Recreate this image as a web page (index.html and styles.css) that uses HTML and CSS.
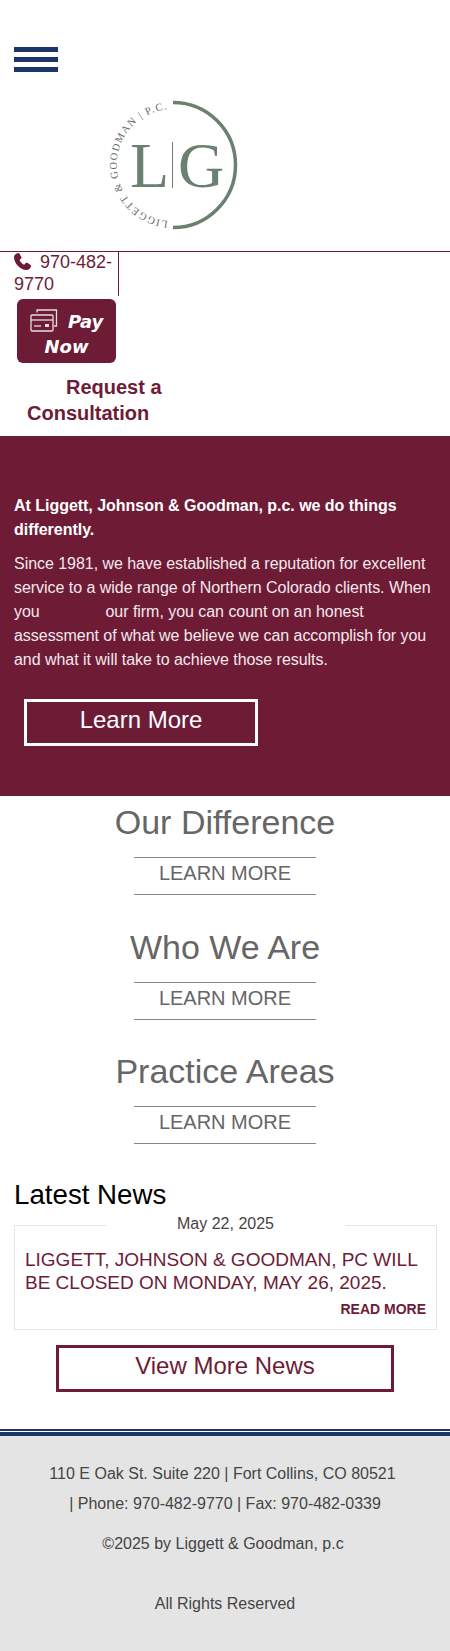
FILE: index.html
```html
<!DOCTYPE html>
<html lang="en">
<head>
    <meta charset="UTF-8">
    <meta name="viewport" content="width=device-width, initial-scale=1.0">
    <title>Liggett, Johnson &amp; Goodman, p.c.</title>
    <link rel="stylesheet" href="styles.css">
</head>
<body>

    <header class="header">
        <div class="menu-btn">
            <span></span>
            <span></span>
            <span></span>
        </div>
        <svg class="logo" width="150" height="150" viewBox="0 0 150 150">
            <defs>
                <path id="logoArc" d="M 68 130.800 A 56 56 0 0 1 68 19.200"></path>
            </defs>
            <path class="logo-ring" d="M 73 12.500 A 62.500 62.500 0 0 1 73 137.500"></path>
            <text class="logo-small"><textPath href="#logoArc" textLength="165">LIGGETT &amp; GOODMAN | P.C.</textPath></text>
            <text class="logo-big" x="30" y="97">L</text>
            <rect class="logo-bar" x="72" y="52" width="1" height="46"></rect>
            <text class="logo-big" x="78" y="97">G</text>
        </svg>
    </header>

    <div class="contact-bar">
        <div class="phone">
            <div class="phone-num">
                <svg class="phone-icon" width="17" height="17" viewBox="1.900 1.400 20.500 20.500">
                    <path d="M6.600 1.500c.6-.3 1.300-.1 1.700.5l2.500 4.200c.3.600.2 1.300-.3 1.800L8.600 9.800c1 2.400 3.100 4.600 5.600 5.700l1.900-1.900c.5-.5 1.200-.6 1.800-.3l4.100 2.500c.6.400.8 1.100.5 1.700-.8 1.800-2.100 4.300-4.700 4.400C10 22.300 1.800 14 1.900 6.200 2 3.600 4.800 2.300 6.600 1.500z"></path>
                </svg>
                970-482-9770
            </div>
        </div>
    </div>

    <a class="pay-btn" href="#">
        <svg class="card-icon" width="28" height="23" viewBox="0 0 28 23">
            <path class="card-back" d="M7 3.500V1h19.500v16H24"></path>
            <rect class="card-front" x="1" y="6" width="22" height="16" rx="1"></rect>
            <path class="card-front" d="M1 11h22"></path>
            <path class="card-front" d="M4 17h7"></path>
            <rect class="card-chip" x="15" y="15" width="4" height="3"></rect>
        </svg>
        Pay Now
    </a>

    <a class="consult" href="#">Request a Consultation</a>

    <section class="hero">
        <p class="hero-lead">At Liggett, Johnson &amp; Goodman, p.c. we do things differently.</p>
        <p class="hero-text">Since 1981, we have established a reputation for excellent service to a wide range of Northern Colorado clients. When you <span class="gap"></span> our firm, you can count on an honest assessment of what we believe we can accomplish for you and what it will take to achieve those results.</p>
        <a class="learn-btn" href="#">Learn More</a>
    </section>

    <section class="feature">
        <h2>Our Difference</h2>
        <a href="#">LEARN MORE</a>
    </section>
    <section class="feature">
        <h2>Who We Are</h2>
        <a href="#">LEARN MORE</a>
    </section>
    <section class="feature">
        <h2>Practice Areas</h2>
        <a href="#">LEARN MORE</a>
    </section>

    <section class="news">
        <h2>Latest News</h2>
        <div class="news-card">
            <div class="news-date"><span>May 22, 2025</span></div>
            <h3>LIGGETT, JOHNSON &amp; GOODMAN, PC WILL BE CLOSED ON MONDAY, MAY 26, 2025.</h3>
            <a class="read-more" href="#">READ MORE</a>
        </div>
        <a class="news-btn" href="#">View More News</a>
    </section>

    <div class="footer-rule"></div>
    <footer class="footer">
        <p class="address">110 E Oak St. Suite 220 | Fort Collins, CO 80521</p>
        <p class="numbers">| Phone: 970-482-9770 | Fax: 970-482-0339</p>
        <p class="copy">©2025 by Liggett &amp; Goodman, p.c</p>
        <p class="rights">All Rights Reserved</p>
    </footer>

</body>
</html>
```

FILE: styles.css
```css
body {
    font-family: 'Liberation Sans', Arial, sans-serif;
    background: #ffffff;
    margin: 0;
}

a {
    text-decoration: none;
}

p {
    margin: 0;
}

.header {
    padding-top: 47px;
    height: 204px;
}

.menu-btn {
    display: flex;
    flex-direction: column;
    gap: 5px;
    width: 44px;
    margin-left: 14px;
}

.menu-btn span {
    display: block;
    height: 5px;
    background: #1b3566;
}

.logo {
    display: block;
    margin: 18px 0 0 100px;
}

.logo-ring {
    fill: none;
    stroke: #6a8070;
    stroke-width: 3.500;
}

.logo-small {
    font-family: 'Liberation Serif', serif;
    font-size: 10.500px;
    fill: #5f6f66;
}

.logo-big {
    font-family: 'Liberation Serif', serif;
    font-size: 64px;
    fill: #6a8070;
}

.logo-bar {
    fill: #6a8070;
}

.contact-bar {
    border-top: 1px solid #6e1b36;
}

.phone {
    display: flow-root;
    width: 104px;
    height: 44px;
    padding-left: 14px;
    border-right: 1px solid #6e1b36;
    font-size: 18px;
    line-height: 22px;
    color: #6e1b36;
}

.phone-num {
    margin-top: -1px;
}

.phone-icon {
    fill: #6e1b36;
    vertical-align: -2px;
    margin-right: 4px;
}

.pay-btn {
    display: block;
    width: 99px;
    height: 64px;
    box-sizing: border-box;
    margin: 3px 0 0 17px;
    padding-top: 10px;
    background: #6e1b36;
    border-radius: 6px;
    font-family: 'DejaVu Sans', sans-serif;
    font-size: 18px;
    font-weight: bold;
    font-style: italic;
    line-height: 25px;
    color: #ffffff;
    text-align: center;
}

.card-icon {
    vertical-align: -4px;
    margin-right: 4px;
    fill: none;
}

.card-back,
.card-front {
    fill: none;
    stroke: #e8dde0;
    stroke-width: 1.300;
}

.card-chip {
    fill: #e8dde0;
}

.consult {
    display: block;
    width: 160px;
    margin: 11px 0 10px 27px;
    text-indent: 39px;
    font-size: 20px;
    font-weight: bold;
    line-height: 26px;
    color: #6e1b36;
}

.hero {
    background: #6e1b36;
    color: #ffffff;
    padding: 58px 14px 50px;
    height: 252px;
}

.hero-lead {
    font-size: 16px;
    font-weight: bold;
    line-height: 24px;
    letter-spacing: -0.03px;
}

.hero-text {
    margin-top: 10px;
    font-size: 16px;
    line-height: 24px;
    letter-spacing: -0.04px;
    color: #f3e9ec;
}

.gap {
    display: inline-block;
    width: 57px;
}

.learn-btn {
    display: block;
    width: 234px;
    height: 47px;
    box-sizing: border-box;
    margin: 27px 0 0 10px;
    border: 3px solid #ffffff;
    font-size: 24px;
    line-height: 36px;
    color: #ffffff;
    text-align: center;
}

.feature {
    text-align: center;
    height: 124.500px;
}

.feature h2 {
    margin: 0;
    padding-top: 6px;
    height: 55px;
    font-size: 34px;
    font-weight: normal;
    line-height: 40px;
    color: #666666;
}

.feature a {
    display: block;
    width: 182px;
    height: 38px;
    box-sizing: border-box;
    margin: 0 auto;
    border-top: 1px solid #888888;
    border-bottom: 1px solid #888888;
    font-size: 20px;
    line-height: 31px;
    color: #666666;
}

.news {
    padding: 8px 14px 0;
}

.news h2 {
    margin: 0;
    font-size: 27.700px;
    font-weight: normal;
    line-height: 34px;
    color: #000000;
}

.news-card {
    height: 105px;
    box-sizing: border-box;
    margin: 13px -1px 0 0;
    padding: 0 10px;
    border: 1px solid #e5e5e5;
}

.news-date {
    display: flex;
    justify-content: center;
    margin-top: -12px;
}

.news-date span {
    padding: 0 71px;
    background: #ffffff;
    font-size: 16px;
    line-height: 20px;
    color: #444444;
}

.news-card h3 {
    margin: 14px 0 0;
    font-size: 19px;
    font-weight: normal;
    line-height: 23px;
    color: #6e1b36;
}

.read-more {
    display: block;
    margin-top: 6px;
    font-size: 14px;
    font-weight: bold;
    line-height: 18px;
    text-align: right;
    color: #6e1b36;
}

.news-btn {
    display: block;
    width: 338px;
    height: 47px;
    box-sizing: border-box;
    margin: 15px auto 0;
    border: 3px solid #6e1b36;
    font-size: 24px;
    line-height: 35px;
    text-align: center;
    color: #6e1b36;
}

.footer-rule {
    margin-top: 37px;
    height: 2px;
    background: #1b3566;
    border-bottom: 1px solid #ffffff;
}

.footer {
    background: #e4e4e5;
    border-top: 4px solid #1b3566;
    padding-top: 23px;
    height: 192px;
    text-align: center;
    font-size: 16px;
    color: #444444;
}

.address {
    padding-right: 5px;
    line-height: 30px;
}

.numbers {
    line-height: 30px;
}

.copy {
    margin-top: 10px;
    padding-right: 4px;
    line-height: 30px;
}

.rights {
    margin-top: 30px;
    line-height: 30px;
}
```
